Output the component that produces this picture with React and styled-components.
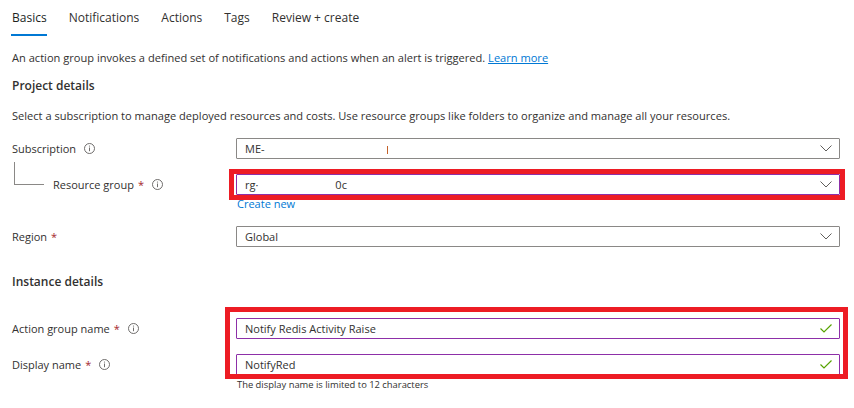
import React from "react";
import styled, { createGlobalStyle } from "styled-components";

const Global = createGlobalStyle`
  html, body { margin: 0; padding: 0; background: #fff; }
  body {
    font-family: "Segoe UI", "Open Sans", "Noto Sans", sans-serif;
    color: #323130;
    font-size: 11px;
  }
`;

const Page = styled.div`
  width: 854px;
  height: 408px;
  overflow: hidden;
  padding: 0 14px 0 12px;
  box-sizing: border-box;
  display: flex;
  flex-direction: column;
`;

const Tabs = styled.div`
  display: flex;
  gap: 22px;
  height: 34px;
`;

const Tab = styled.div`
  padding-top: 8px;
  font-size: 12px;
  line-height: 20px;
  height: 26px;
  border-bottom: 2px solid ${(p) => (p.$active ? "#0078d4" : "transparent")};
  color: ${(p) => (p.$active ? "#201f1e" : "#323130")};
  margin-left: ${(p) => (p.$first ? "-1px" : "0")};
  padding-left: ${(p) => (p.$first ? "1px" : "0")};
`;

const Para = styled.p`
  margin: ${(p) => p.$mt || 0}px 0 0;
  line-height: 16px;
  font-size: 11.08px;
`;

const Link = styled.a`
  color: #0078d4;
  text-decoration: ${(p) => (p.$underline ? "underline" : "none")};
`;

const Heading = styled.h2`
  margin: ${(p) => p.$mt}px 0 0;
  font-size: 12px;
  font-weight: 600;
  line-height: 20px;
  color: #323130;
`;

const Row = styled.div`
  display: grid;
  grid-template-columns: 224px 604px;
  align-items: start;
  margin-top: ${(p) => p.$mt}px;
`;

const LabelCell = styled.div`
  display: flex;
  align-items: center;
  height: 21px;
`;

const Connector = styled.span`
  display: block;
  align-self: flex-start;
  margin: -12px 9px 0 2px;
  width: 29px;
  height: 22px;
  border-left: 1px solid #8a8886;
  border-bottom: 1px solid #8a8886;
`;

const Req = styled.span`
  color: #a4262c;
  margin-left: 4px;
`;

const InfoWrap = styled.span`
  display: inline-flex;
  margin-left: 8px;
`;

const Field = styled.div`
  position: relative;
  display: flex;
  flex-direction: column;
`;

const Box = styled.div`
  height: 21px;
  box-sizing: border-box;
  border: 1px solid ${(p) => (p.$purple ? "#8d2fa8" : "#8a8886")};
  border-radius: 1px;
  display: flex;
  align-items: center;
  padding: 0 7px 0 8px;
  font-size: 11px;
  color: #323130;
`;

const BoxText = styled.span`
  flex: 1;
  white-space: pre;
`;

const Gap = styled.span`
  display: inline-block;
  width: ${(p) => p.$w}px;
`;

const Redact = styled.span`
  display: inline-block;
  width: 1px;
  height: 8px;
  background: #c4622a;
  vertical-align: middle;
  margin-left: ${(p) => p.$ml}px;
`;

const Highlight = styled.div`
  position: absolute;
  border: 5px solid #ed1c24;
  pointer-events: none;
  top: ${(p) => p.$t}px;
  left: ${(p) => p.$l}px;
  right: ${(p) => p.$r}px;
  ${(p) => (p.$h != null ? `height: ${p.$h}px; box-sizing: border-box;` : `bottom: ${p.$b}px;`)}
`;

const SubLink = styled(Link)`
  font-size: 11px;
  line-height: 14px;
  margin-top: 2px;
  padding-left: 1px;
`;

const Helper = styled.div`
  font-size: 9.4px;
  line-height: 12px;
  margin-top: 4px;
  padding-left: 1px;
  color: #323130;
`;

const Group = styled.div`
  position: relative;
  margin-top: 26px;
`;

const Chevron = () => (
  <svg width="12" height="7" viewBox="0 0 12 7">
    <path d="M0.5 0.5 L6 6 L11.5 0.5" fill="none" stroke="#605e5c" strokeWidth="1" />
  </svg>
);

const Check = () => (
  <svg width="12" height="9" viewBox="0 0 12 9">
    <path d="M0.5 4.5 L4 8 L11.5 0.5" fill="none" stroke="#57a300" strokeWidth="1.2" />
  </svg>
);

const Info = () => (
  <svg width="11" height="11" viewBox="0 0 11 11">
    <circle cx="5.5" cy="5.5" r="5" fill="none" stroke="#605e5c" strokeWidth="0.9" />
    <line x1="5.5" y1="4.5" x2="5.5" y2="8.2" stroke="#605e5c" strokeWidth="0.9" />
    <circle cx="5.5" cy="3" r="0.6" fill="#605e5c" />
  </svg>
);

export default function App() {
  return (
    <>
      <Global />
      <Page>
        <Tabs>
          <Tab $active $first>Basics</Tab>
          <Tab>Notifications</Tab>
          <Tab>Actions</Tab>
          <Tab>Tags</Tab>
          <Tab>Review + create</Tab>
        </Tabs>
        <Para $mt={16}>
          An action group invokes a defined set of notifications and actions when an alert is triggered.{" "}
          <Link $underline href="#">Learn more</Link>
        </Para>
        <Heading $mt={10}>Project details</Heading>
        <Para $mt={12}>
          Select a subscription to manage deployed resources and costs. Use resource groups like folders to organize and manage all your resources.
        </Para>

        <Row $mt={14}>
          <LabelCell>
            Subscription
            <InfoWrap><Info /></InfoWrap>
          </LabelCell>
          <Box>
            <BoxText>ME-<Redact $ml={122} /></BoxText>
            <Chevron />
          </Box>
        </Row>

        <Row $mt={15}>
          <LabelCell>
            <Connector />
            Resource group<Req>*</Req>
            <InfoWrap><Info /></InfoWrap>
          </LabelCell>
          <Field>
            <Box $purple>
              <BoxText>rg·<Gap $w={77} />0c</BoxText>
              <Chevron />
            </Box>
            <Highlight $t={-5} $l={-7} $r={-5} $h={31} />
            <SubLink href="#">Create new</SubLink>
          </Field>
        </Row>

        <Row $mt={15}>
          <LabelCell>
            Region<Req>*</Req>
          </LabelCell>
          <Box>
            <BoxText>Global</BoxText>
            <Chevron />
          </Box>
        </Row>

        <Heading $mt={25}>Instance details</Heading>

        <Group>
          <Row $mt={0}>
            <LabelCell>
              Action group name<Req>*</Req>
              <InfoWrap><Info /></InfoWrap>
            </LabelCell>
            <Box $purple>
              <BoxText>Notify Redis Activity Raise</BoxText>
              <Check />
            </Box>
          </Row>
          <Row $mt={15}>
            <LabelCell>
              Display name<Req>*</Req>
              <InfoWrap><Info /></InfoWrap>
            </LabelCell>
            <Box $purple>
              <BoxText>NotifyRed</BoxText>
              <Check />
            </Box>
          </Row>
          <Highlight $t={-11} $l={213} $r={-8} $b={-4} />
        </Group>
        <Row $mt={0}>
          <span />
          <Helper>The display name is limited to 12 characters</Helper>
        </Row>
      </Page>
    </>
  );
}
